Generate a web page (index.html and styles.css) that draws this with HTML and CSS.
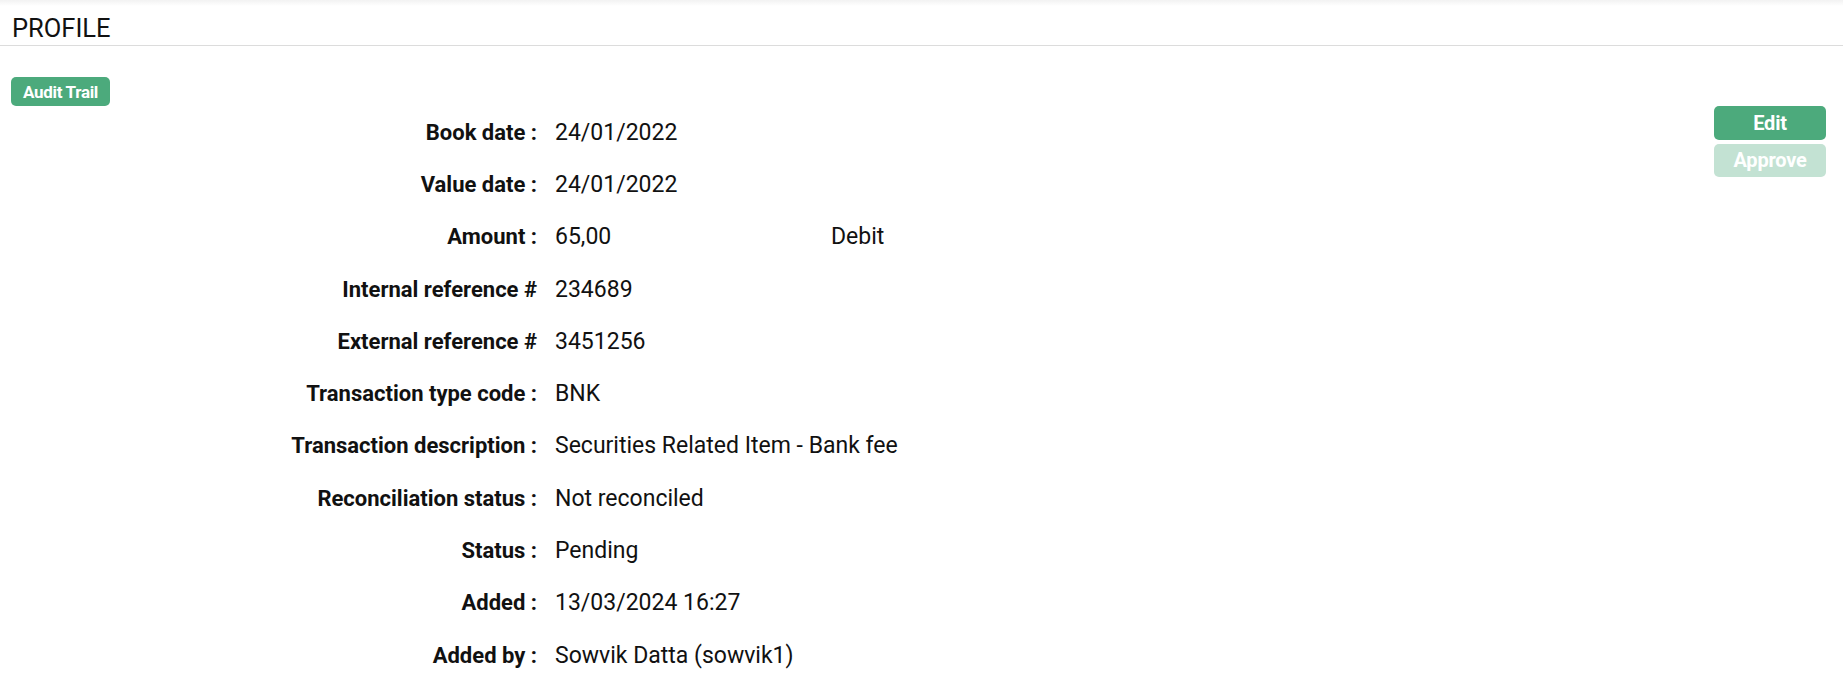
FILE: index.html
```html
<!DOCTYPE html>
<html>
<head>
<meta charset="utf-8">
<link rel="stylesheet" href="styles.css">
</head>
<body>
<header class="page-header">
  <h1 class="title">PROFILE</h1>
</header>
<main class="content">
  <button class="btn btn-small">Audit Trail</button>
  <div class="panel">
    <dl class="details">
      <dt>Book date :</dt><dd>24/01/2022</dd>
      <dt>Value date :</dt><dd>24/01/2022</dd>
      <dt>Amount :</dt><dd><span class="amount">65,00</span><span>Debit</span></dd>
      <dt>Internal reference #</dt><dd>234689</dd>
      <dt>External reference #</dt><dd>3451256</dd>
      <dt>Transaction type code :</dt><dd>BNK</dd>
      <dt>Transaction description :</dt><dd>Securities Related Item - Bank fee</dd>
      <dt>Reconciliation status :</dt><dd>Not reconciled</dd>
      <dt>Status :</dt><dd>Pending</dd>
      <dt>Added :</dt><dd>13/03/2024 16:27</dd>
      <dt>Added by :</dt><dd>Sowvik Datta (sowvik1)</dd>
    </dl>
    <div class="actions">
      <button class="btn btn-action">Edit</button>
      <button class="btn btn-action btn-disabled">Approve</button>
    </div>
  </div>
</main>
</body>
</html>
```
FILE: styles.css
```css
html, body {
  margin: 0;
  padding: 0;
  background: #fff;
  color: #111;
  font-family: Roboto, "Liberation Sans", sans-serif;
}
.page-header {
  height: 46px;
  border-bottom: 1px solid #dcdcdc;
  background: linear-gradient(#f2f2f2 0, #fff 6px);
  box-sizing: border-box;
  display: flex;
  align-items: center;
  padding: 0 12px;
}
.title {
  margin: 0;
  font-size: 25.5px;
  font-weight: normal;
  line-height: 1;
  padding-top: 13px;
}
.content {
  padding: 31px 17px 0 11px;
}
.btn {
  border: 0;
  color: #fff;
  background: #4caa7c;
  font-family: Roboto, "Liberation Sans", sans-serif;
  font-weight: bold;
  cursor: pointer;
  display: block;
}
.btn-small {
  width: 99px;
  height: 29px;
  border-radius: 5px;
  font-size: 17px;
  padding: 0;
  letter-spacing: -0.3px;
}
.panel {
  display: flex;
  justify-content: space-between;
  align-items: flex-start;
}
.details {
  margin: 0;
  display: grid;
  grid-template-columns: 526px auto;
  grid-auto-rows: 52.3px;
  column-gap: 18px;
  align-items: center;
}
.details dt {
  text-align: right;
  font-weight: bold;
  font-size: 22px;
}
.details dd {
  margin: 0;
  font-size: 23px;
}
.amount {
  display: inline-block;
  width: 276px;
}
.actions {
  display: flex;
  flex-direction: column;
  gap: 4px;
}
.btn-action {
  width: 112px;
  height: 33.5px;
  border-radius: 5px;
  font-size: 20px;
  padding: 0;
  letter-spacing: -0.2px;
}
.btn-disabled {
  background: #c3e2d3;
}
```
